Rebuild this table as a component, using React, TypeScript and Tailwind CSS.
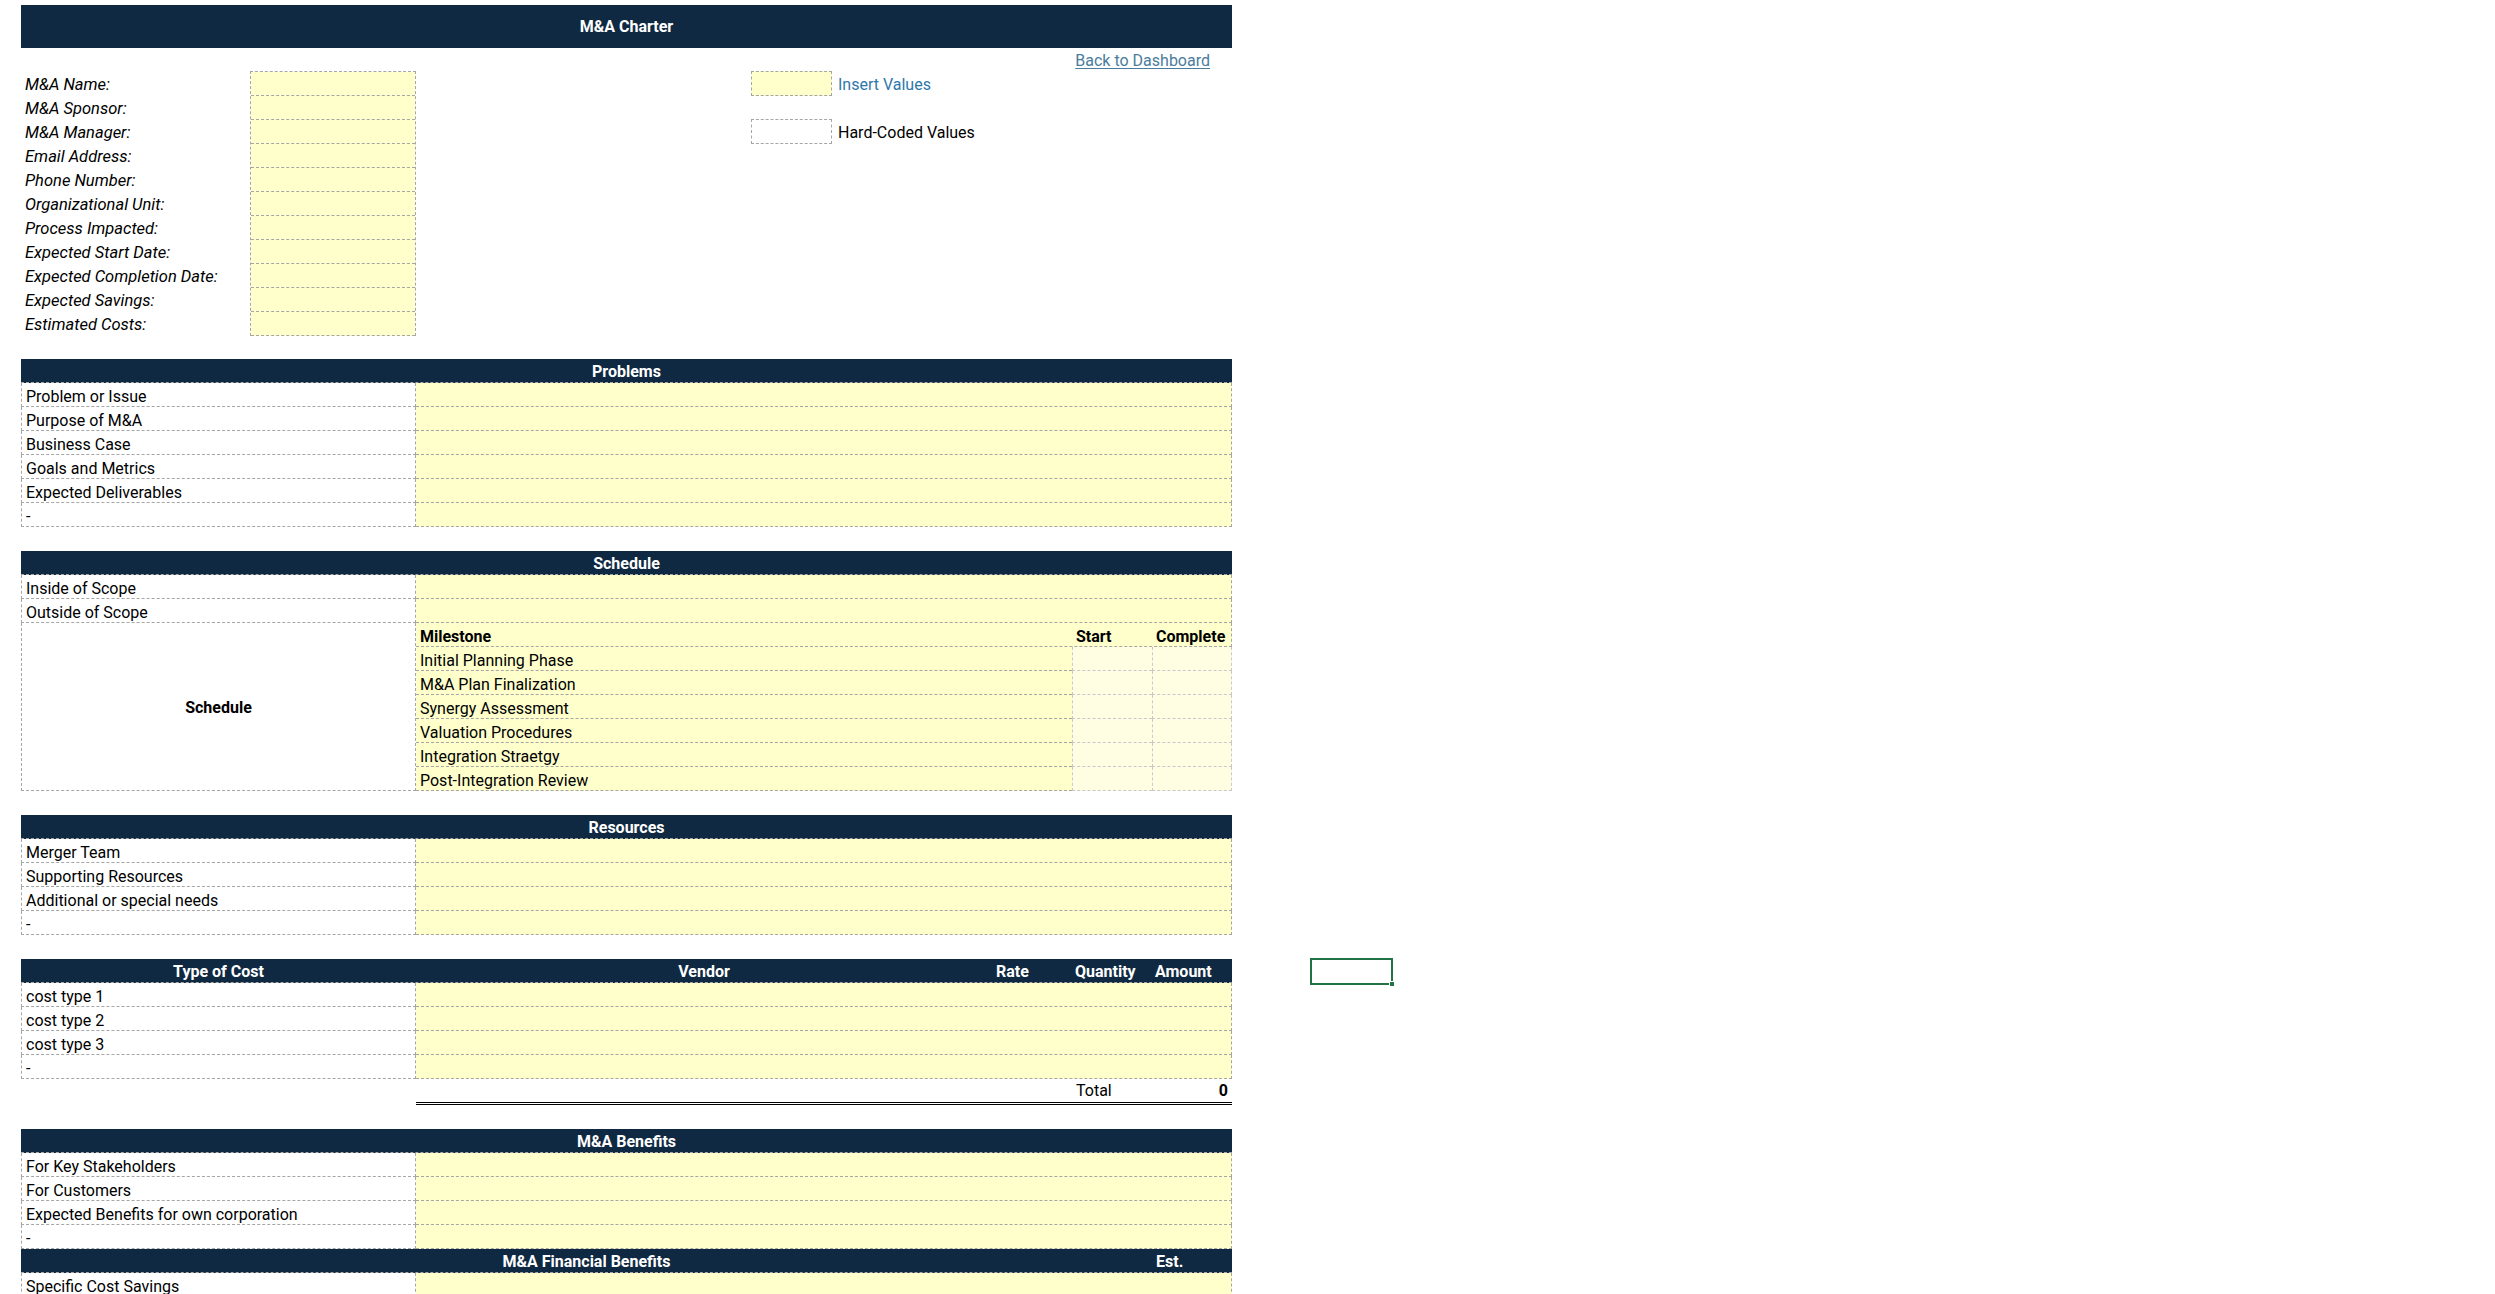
import React from "react";

const infoLabels = [
  "M&A Name:",
  "M&A Sponsor:",
  "M&A Manager:",
  "Email Address:",
  "Phone Number:",
  "Organizational Unit:",
  "Process Impacted:",
  "Expected Start Date:",
  "Expected Completion Date:",
  "Expected Savings:",
  "Estimated Costs:",
];

const milestones = [
  "Initial Planning Phase",
  "M&A Plan Finalization",
  "Synergy Assessment",
  "Valuation Procedures",
  "Integration Straetgy",
  "Post-Integration Review",
];

function Header({ title }: { title: string }) {
  return (
    <div className="h-[24px] bg-[#0f2942] text-white font-bold flex items-center justify-center pt-[2px] border-b border-dashed border-[#a6a6a6]">
      {title}
    </div>
  );
}

function Row({ label }: { label: string }) {
  return (
    <div className="flex h-[24px]">
      <div className="w-[395px] h-full border-l border-r border-b border-dashed border-[#a6a6a6] pl-[4px] leading-[27px] whitespace-nowrap">
        {label}
      </div>
      <div className="flex-1 h-full bg-[#ffffcc] border-r border-b border-dashed border-[#a6a6a6]" />
    </div>
  );
}

function Spacer() {
  return <div className="h-[24px]" />;
}

export default function App() {
  return (
    <div className="relative min-h-screen bg-white text-black text-[16px] font-['Roboto','Liberation_Sans',sans-serif]">
      <div className="w-[1211px] ml-[21px] pt-[5px]">
        {/* title */}
        <div className="h-[43px] bg-[#0f2942] text-white font-bold flex items-center justify-center pt-[1px]">
          M&amp;A Charter
        </div>
        <div className="h-[23px] flex items-center justify-end pr-[22px] pt-[2px]">
          <a href="#" className="text-[#4a7c9c] underline underline-offset-2 leading-none">
            Back to Dashboard
          </a>
        </div>

        {/* info block */}
        <div className="flex">
          <div className="w-[229px]">
            {infoLabels.map((l) => (
              <div key={l} className="h-[24px] leading-[28px] pl-[4px] italic text-[16.5px] whitespace-nowrap">
                {l}
              </div>
            ))}
          </div>
          <div className="w-[166px] border-t border-l border-r border-dashed border-[#a6a6a6]">
            {infoLabels.map((l) => (
              <div key={l} className="h-[24px] bg-[#ffffcc] border-b border-dashed border-[#a6a6a6]" />
            ))}
          </div>
          <div className="w-[335px]" />
          <div className="flex flex-col gap-[23px]">
            <div className="flex items-center h-[25px]">
              <div className="w-[81px] h-[25px] bg-[#ffffcc] border border-dashed border-[#a6a6a6]" />
              <span className="ml-[6px] pt-[2px] text-[#2e78aa]">Insert Values</span>
            </div>
            <div className="flex items-center h-[25px]">
              <div className="w-[81px] h-[25px] bg-white border border-dashed border-[#a6a6a6]" />
              <span className="ml-[6px] pt-[2px]">Hard-Coded Values</span>
            </div>
          </div>
        </div>
        <div className="h-[23px]" />

        {/* problems */}
        <Header title="Problems" />
        {["Problem or Issue", "Purpose of M&A", "Business Case", "Goals and Metrics", "Expected Deliverables", "-"].map((l) => (
          <Row key={l} label={l} />
        ))}
        <Spacer />

        {/* schedule */}
        <Header title="Schedule" />
        <Row label="Inside of Scope" />
        <Row label="Outside of Scope" />
        <div className="flex">
          <div className="w-[395px] h-[168px] border-l border-r border-b border-dashed border-[#a6a6a6] flex items-center justify-center font-bold pt-[2px]">
            Schedule
          </div>
          <div className="flex-1">
            <div className="flex h-[24px] bg-[#ffffcc] border-r border-b border-dashed border-[#a6a6a6] font-bold leading-[27px]">
              <div className="w-[656px] pl-[4px]">Milestone</div>
              <div className="w-[80px] pl-[4px]">Start</div>
              <div className="flex-1 pl-[4px]">Complete</div>
            </div>
            {milestones.map((m) => (
              <div key={m} className="flex h-[24px]">
                <div className="w-[656px] h-full bg-[#ffffcc] border-b border-dashed border-[#a6a6a6] pl-[4px] leading-[27px] whitespace-nowrap">
                  {m}
                </div>
                <div className="w-[80px] h-full bg-[#fffee2] border-l border-b border-dashed border-[#c8c8c8]" />
                <div className="flex-1 h-full bg-[#fffee2] border-l border-r border-b border-dashed border-[#c8c8c8]" />
              </div>
            ))}
          </div>
        </div>
        <Spacer />

        {/* resources */}
        <Header title="Resources" />
        {["Merger Team", "Supporting Resources", "Additional or special needs", "-"].map((l) => (
          <Row key={l} label={l} />
        ))}
        <Spacer />

        {/* costs */}
        <div className="flex h-[24px] bg-[#0f2942] text-white font-bold border-b border-dashed border-[#a6a6a6] leading-[25px]">
          <div className="w-[395px] text-center">Type of Cost</div>
          <div className="w-[576px] text-center">Vendor</div>
          <div className="w-[80px] pl-[4px]">Rate</div>
          <div className="w-[80px] pl-[3px]">Quantity</div>
          <div className="flex-1 pl-[3px]">Amount</div>
        </div>
        {["cost type 1", "cost type 2", "cost type 3", "-"].map((l) => (
          <Row key={l} label={l} />
        ))}
        <div className="flex h-[26px]">
          <div className="w-[395px]" />
          <div className="flex-1 flex border-b-[3px] border-double border-black leading-[24px]">
            <div className="w-[656px]" />
            <div className="w-[80px] pl-[4px]">Total</div>
            <div className="flex-1 text-right pr-[4px] font-bold">0</div>
          </div>
        </div>
        <Spacer />

        {/* benefits */}
        <Header title="M&A Benefits" />
        {["For Key Stakeholders", "For Customers", "Expected Benefits for own corporation", "-"].map((l) => (
          <Row key={l} label={l} />
        ))}
        <div className="flex h-[24px] bg-[#0f2942] text-white font-bold border-b border-dashed border-[#a6a6a6] leading-[25px]">
          <div className="w-[1131px] text-center">M&amp;A Financial Benefits</div>
          <div className="flex-1 pl-[4px]">Est.</div>
        </div>
        <Row label="Specific Cost Savings" />
      </div>

      {/* active cell */}
      <div className="absolute left-[1310px] top-[958px] w-[83px] h-[27px] border-2 border-[#217346]">
        <div className="absolute -right-[4px] -bottom-[4px] w-[6px] h-[6px] bg-[#217346] border border-white" />
      </div>
    </div>
  );
}
